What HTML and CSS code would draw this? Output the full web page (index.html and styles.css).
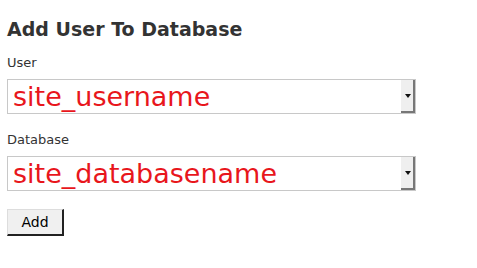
FILE: index.html
```html
<!DOCTYPE html>
<html lang="en">
<head>
  <meta charset="UTF-8" />
  <title>Add User To Database</title>
  <link rel="stylesheet" href="styles.css">
</head>
<body>

  <h2>Add User To Database</h2>

  <form class="add-form">
    <label for="user">User</label>
    <div class="select">
      <span class="select-value">site_username</span>
      <span class="select-arrow"></span>
    </div>

    <label for="db">Database</label>
    <div class="select">
      <span class="select-value">site_databasename</span>
      <span class="select-arrow"></span>
    </div>

    <button type="button" class="btn">Add</button>
  </form>

</body>
</html>
```

FILE: styles.css
```css
body {
  margin: 0;
  padding: 0 7px;
  font-family: "DejaVu Sans", Verdana, sans-serif;
  color: #333;
  background: #fff;
}

h2 {
  font-size: 19px;
  line-height: 22px;
  font-weight: bold;
  margin: 18px 0 15px;
  color: #333;
}

.add-form {
  display: flex;
  flex-direction: column;
  align-items: flex-start;
}

label {
  font-size: 13px;
  line-height: 15px;
  margin-bottom: 9px;
}

.select {
  width: 409px;
  height: 35px;
  box-sizing: border-box;
  border: 1px solid #c8c8c8;
  display: flex;
  align-items: center;
  margin-bottom: 18px;
}

.select-value {
  flex: 1;
  padding-left: 5px;
  font-family: "DejaVu Sans", sans-serif;
  font-size: 27px;
  line-height: 33px;
  color: #e8161c;
}

.select-arrow {
  width: 14px;
  height: 33px;
  background: #efefef;
  box-shadow: inset -2px -2px 0 #777;
  position: relative;
}

.select-arrow::after {
  content: "";
  position: absolute;
  left: 4px;
  top: 14px;
  border-left: 3px solid transparent;
  border-right: 3px solid transparent;
  border-top: 4px solid #111;
}

.btn {
  font-family: "DejaVu Sans", sans-serif;
  font-size: 14px;
  width: 57px;
  height: 27px;
  background: #f0f0f0;
  border-style: solid;
  border-color: #ddd #222 #222 #ddd;
  border-width: 1px 2px 2px 1px;
  color: #000;
  padding: 0;
}
```
